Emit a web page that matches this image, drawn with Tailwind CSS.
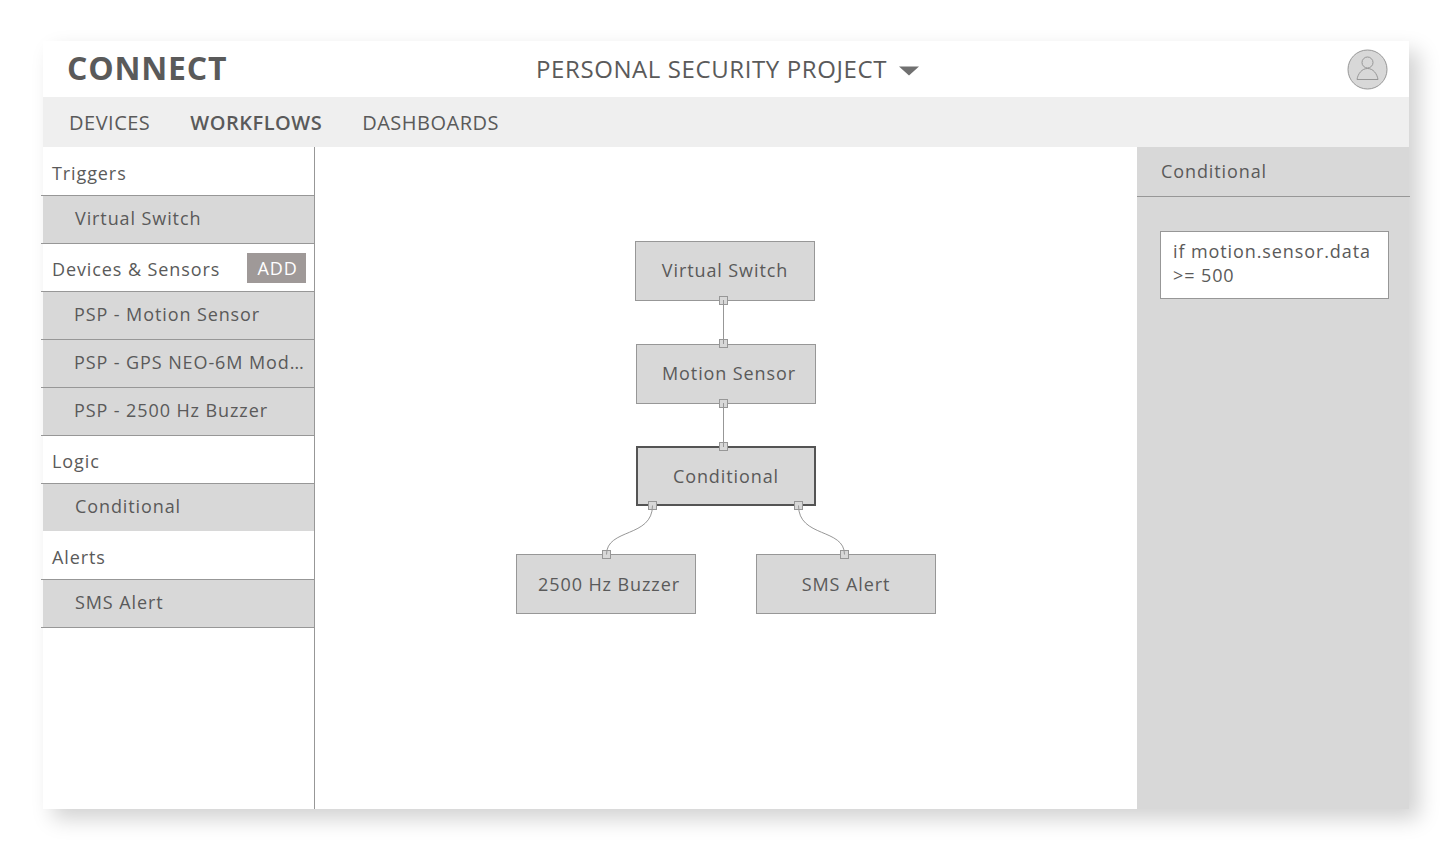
<!DOCTYPE html>
<html lang="en">
<head>
<meta charset="utf-8">
<meta name="viewport" content="width=device-width, initial-scale=1">
<title>Connect – Workflows</title>
<script src="https://cdn.jsdelivr.net/npm/@tailwindcss/browser@4"></script>
</head>
<body class="flex min-h-screen bg-white py-[41px] pr-[41px] pl-[43px] font-['Open_Sans','Noto_Sans',sans-serif] text-lg leading-6 tracking-wider text-[#5a5a5a]">
<div class="flex flex-1 flex-col bg-white shadow-[10px_10px_20px_rgba(0,0,0,0.18)]">

  <header class="grid h-14 grid-cols-[1fr_auto_1fr] items-center pr-[21px] pl-6">
    <h1 class="pb-0.5 text-[32px] leading-10 font-bold tracking-wide">CONNECT</h1>
    <div class="relative flex items-center">
      <select aria-label="Project" class="appearance-none bg-transparent pr-8 text-2xl tracking-wide">
        <option>PERSONAL SECURITY PROJECT</option>
      </select>
      <svg class="pointer-events-none absolute right-0 mt-1 h-[10px] w-5" viewBox="0 0 20 10" fill="#707070" aria-hidden="true"><path d="M0 0.500H20L10 9.500Z"/></svg>
    </div>
    <button type="button" aria-label="Account" class="justify-self-end">
      <svg class="size-[41px]" viewBox="0 0 41 41" fill="none" stroke="#979797" aria-hidden="true">
        <circle cx="20.500" cy="20.500" r="19.500" fill="#d8d8d8"/>
        <circle cx="20.500" cy="13.500" r="5.500"/>
        <path d="M10 30.500C11 24.500 15 19.500 20.500 19.500S30 24.500 31 30.500Z"/>
      </svg>
    </button>
  </header>

  <nav class="flex h-[50px] items-center gap-10 bg-[#efefef] px-[26px] pt-0.5 text-xl tracking-wide">
    <a href="#devices">DEVICES</a>
    <a href="#workflows" aria-current="page" class="font-semibold">WORKFLOWS</a>
    <a href="#dashboards">DASHBOARDS</a>
  </nav>

  <div class="flex flex-1">
    <aside class="w-[272px] shrink-0 border-r border-[#979797]">
      <h2 class="-ml-0.5 flex h-[49px] items-center border-b border-[#979797] pt-1 pl-[11px]">Triggers</h2>
      <ul>
        <li class="-ml-0.5 h-12 border-b border-[#979797] pl-0.5"><button type="button" class="size-full bg-[#d8d8d8] pb-[3px] pl-8 text-left">Virtual Switch</button></li>
      </ul>
      <div class="-ml-0.5 flex h-12 items-center justify-between border-b border-[#979797] pr-2 pl-[11px]">
        <h2 class="pt-0.5">Devices &amp; Sensors</h2>
        <button type="button" class="h-[30px] w-[59px] bg-[#9f9998] pl-0.5 text-white">ADD</button>
      </div>
      <ul>
        <li class="-ml-0.5 h-12 border-b border-[#979797] pl-0.5"><button type="button" class="size-full truncate bg-[#d8d8d8] pr-2 pb-[3px] pl-[31px] text-left">PSP - Motion Sensor</button></li>
        <li class="-ml-0.5 h-12 border-b border-[#979797] pl-0.5"><button type="button" class="size-full truncate bg-[#d8d8d8] pr-2 pb-[3px] pl-[31px] text-left">PSP - GPS NEO-6M Mod…</button></li>
        <li class="-ml-0.5 h-12 border-b border-[#979797] pl-0.5"><button type="button" class="size-full truncate bg-[#d8d8d8] pr-2 pb-[3px] pl-[31px] text-left">PSP - 2500 Hz Buzzer</button></li>
      </ul>
      <h2 class="-ml-0.5 flex h-12 items-center border-b border-[#979797] pt-0.5 pl-[11px]">Logic</h2>
      <ul>
        <li class="h-[47px]"><button type="button" class="size-full bg-[#d8d8d8] pb-[3px] pl-8 text-left">Conditional</button></li>
      </ul>
      <h2 class="-ml-0.5 flex h-[49px] items-center border-b border-[#979797] pt-1 pl-[11px]">Alerts</h2>
      <ul>
        <li class="-ml-0.5 h-12 border-b border-[#979797] pl-0.5"><button type="button" class="size-full bg-[#d8d8d8] pb-[3px] pl-8 text-left">SMS Alert</button></li>
      </ul>
    </aside>

    <main class="flex-1 pt-[94px]">
      <div class="relative mx-auto h-[373px] w-[420px]">
        <button type="button" class="absolute top-0 left-[119px] h-[60px] w-[180px] border border-[#979797] bg-[#d8d8d8] pb-0.5">Virtual Switch</button>
        <button type="button" class="absolute top-[103px] left-[120px] h-[60px] w-[180px] border border-[#979797] bg-[#d8d8d8] pb-0.5 pl-1.5">Motion Sensor</button>
        <button type="button" class="absolute top-[205px] left-[120px] h-[60px] w-[180px] border-2 border-[#545454] bg-[#d8d8d8]">Conditional</button>
        <button type="button" class="absolute top-[313px] left-0 h-[60px] w-[180px] border border-[#979797] bg-[#d8d8d8] pl-1.5">2500 Hz Buzzer</button>
        <button type="button" class="absolute top-[313px] left-[240px] h-[60px] w-[180px] border border-[#979797] bg-[#d8d8d8]">SMS Alert</button>
        <!-- Ports and the connectors between them -->
        <svg class="pointer-events-none absolute inset-0 size-full" viewBox="0 0 420 373" fill="none" stroke="#979797" aria-hidden="true">
          <g fill="#d8d8d8">
            <rect x="203.500" y="55.500" width="8" height="8"/>
            <rect x="203.500" y="98.500" width="8" height="8"/>
            <rect x="203.500" y="158.500" width="8" height="8"/>
            <rect x="203.500" y="201.500" width="8" height="8"/>
            <rect x="132.500" y="260.500" width="8" height="8"/>
            <rect x="278.500" y="260.500" width="8" height="8"/>
            <rect x="86.500" y="309.500" width="8" height="8"/>
            <rect x="324.500" y="309.500" width="8" height="8"/>
          </g>
          <path d="M207.500 59V103M207.500 162V206"/>
          <path d="M136.500 264.500C136.500 297 90.500 287 90.500 313.500"/>
          <path d="M282.500 264.500C282.500 297 328.500 287 328.500 313.500"/>
        </svg>
      </div>
    </main>

    <aside class="w-[272px] shrink-0 bg-[#d8d8d8]">
      <h2 class="-mr-px flex h-[50px] items-center border-b border-[#979797] pb-0.5 pl-6"><label for="condition">Conditional</label></h2>
      <div class="pt-[34px] pr-5 pl-[23px]">
        <textarea id="condition" rows="2" spellcheck="false" class="block h-[68px] w-full resize-none overflow-hidden border border-[#979797] bg-white px-3 pt-[7px]">if motion.sensor.data
&gt;= 500</textarea>
      </div>
    </aside>
  </div>
</div>
</body>
</html>
